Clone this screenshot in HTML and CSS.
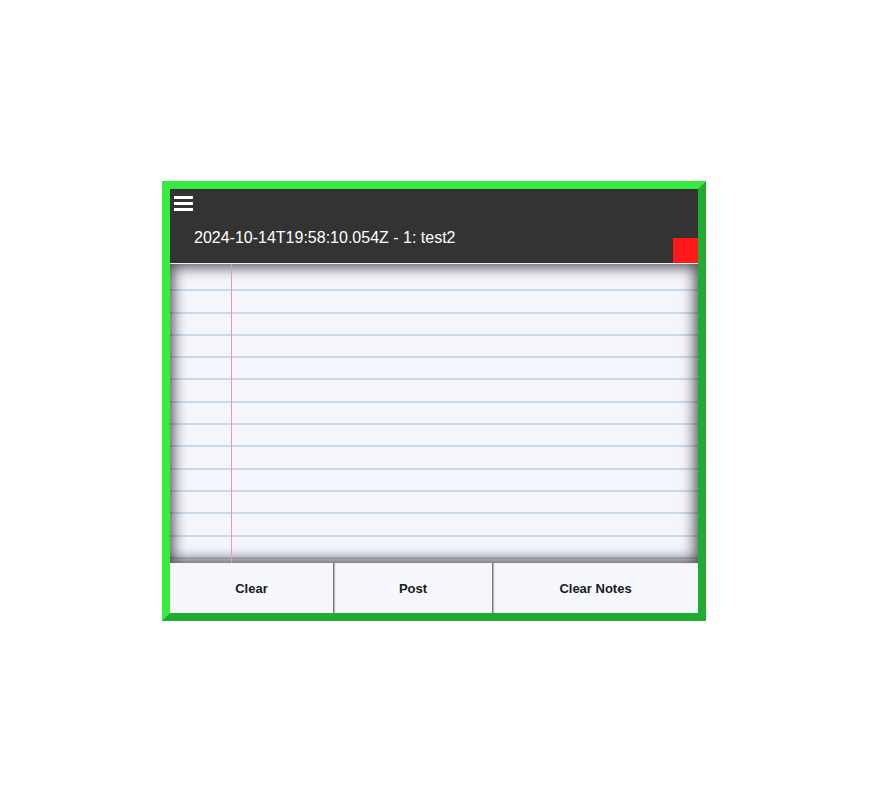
FILE: index.html
```html
<!DOCTYPE html>
<html>
<head>
<meta charset="utf-8">
<link rel="stylesheet" href="styles.css">
</head>
<body>
<div class="frame">
  <div class="header">
    <div class="menu">
      <svg width="19" height="17" viewBox="0 0 19 17"><rect x="0" y="0" width="19" height="3" fill="#fff"/><rect x="0" y="6" width="19" height="3" fill="#fff"/><rect x="0" y="12" width="19" height="3" fill="#fff"/></svg>
    </div>
    <div class="title-row">
      <span class="title">2024-10-14T19:58:10.054Z - 1: test2</span>
      <span class="status"></span>
    </div>
  </div>
  <div class="paper"><div class="margin"></div></div>
  <div class="buttons">
    <button class="btn btn-clear">Clear</button>
    <button class="btn btn-post">Post</button>
    <button class="btn btn-notes">Clear Notes</button>
  </div>
</div>
</body>
</html>
```
FILE: styles.css
```css
html, body {
  margin: 0;
  padding: 0;
  background: #fff;
}
body {
  font-family: "Liberation Sans", Arial, sans-serif;
}
.frame {
  margin: 181px 0 0 162px;
  width: 528px;
  border-style: solid;
  border-width: 8px;
  border-color: #36ec3e #20ac30 #20ac30 #36ec3e;
  background: #f5f6fb;
  display: flex;
  flex-direction: column;
}
.header {
  background: #333333;
  height: 74px;
  border-bottom: 1px solid #f0f0f0;
  display: flex;
  flex-direction: column;
}
.menu {
  padding: 7px 0 0 4px;
  height: 17px;
  line-height: 0;
}
.title-row {
  display: flex;
  align-items: flex-end;
  justify-content: space-between;
  flex: 1;
}
.title {
  color: #fff;
  font-size: 16px;
  padding: 0 0 16px 24px;
}
.status {
  width: 25px;
  height: 25px;
  background: #ff1a1a;
}
.paper {
  height: 299px;
  display: flex;
  background-color: #f4f6fb;
  background-image: repeating-linear-gradient(to bottom, transparent 0, transparent 20.3px, #c8d9ea 20.3px, #c8d9ea 22.3px);
  background-position: 0 5px;
  box-shadow: inset 0 0 14px 3px rgba(30, 30, 40, 0.8);
}
.margin {
  width: 61px;
  border-right: 1px solid #dc9ebc;
}
.buttons {
  display: flex;
  height: 50px;
}
.btn {
  font-family: "Liberation Sans", Arial, sans-serif;
  font-weight: bold;
  font-size: 13px;
  color: #1a1a1a;
  background: #f5f7fc;
  border: none;
  margin: 0;
  padding: 0;
  height: 50px;
}
.btn-clear { width: 163px; }
.btn-post {
  width: 159px;
  border-left: 1px solid #7a7a80;
  box-shadow: inset 1px 0 1px #b0b0b6;
}
.btn-notes {
  width: 206px;
  border-left: 1px solid #7a7a80;
  box-shadow: inset 1px 0 1px #b0b0b6;
}
```
